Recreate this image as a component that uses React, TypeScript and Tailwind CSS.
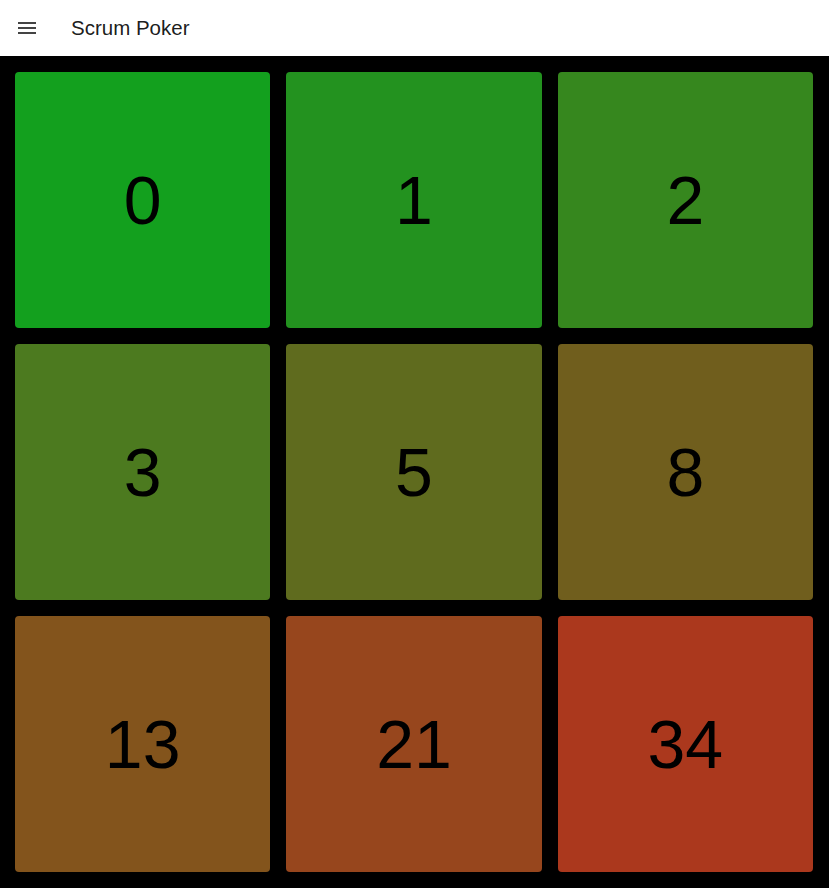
const cards = [
  { label: '0', color: 'bg-[#13a01e]' },
  { label: '1', color: 'bg-[#23921f]' },
  { label: '2', color: 'bg-[#36871e]' },
  { label: '3', color: 'bg-[#4c7a1f]' },
  { label: '5', color: 'bg-[#5f6b1e]' },
  { label: '8', color: 'bg-[#705e1d]' },
  { label: '13', color: 'bg-[#83541c]' },
  { label: '21', color: 'bg-[#97461d]' },
  { label: '34', color: 'bg-[#ab381d]' },
];

export default function App() {
  return (
    <div className="min-h-[888px] bg-black font-['Liberation_Sans',Arial,sans-serif]">
      <header className="flex h-14 items-center bg-white px-[15px]">
        <svg viewBox="0 0 24 24" className="h-6 w-6 fill-[#444]">
          <path d="M3 18h18v-2H3v2zm0-5h18v-2H3v2zm0-7v2h18V6H3z" />
        </svg>
        <h1 className="ml-8 text-[20.5px] text-black/90">Scrum Poker</h1>
      </header>
      <main className="grid grid-cols-3 gap-4 pb-4 pl-[15px] pr-4 pt-4">
        {cards.map((card) => (
          <button
            key={card.label}
            className={`${card.color} flex h-[256px] items-center justify-center rounded text-[68px] text-black`}
          >
            {card.label}
          </button>
        ))}
      </main>
    </div>
  );
}
